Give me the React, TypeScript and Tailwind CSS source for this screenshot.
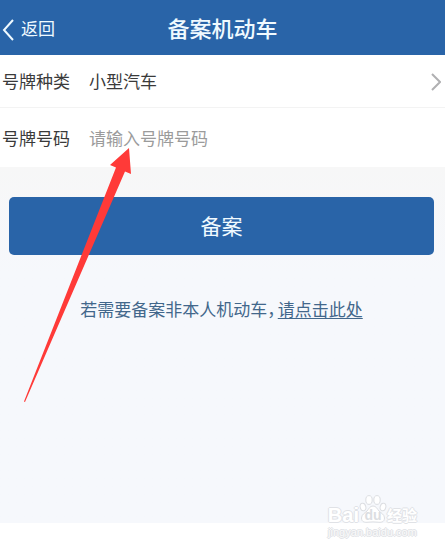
function Watermark() {
  return (
    <div className="absolute right-7 bottom-2 flex flex-col items-center text-white [text-shadow:1px_0_0_#e0e2e6,-1px_0_0_#e0e2e6,0_1px_0_#e0e2e6,0_-1px_0_#e0e2e6]">
      <div className="flex h-7 items-end">
        <span className="text-xl leading-5 font-bold">Bai</span>
        <span className="relative flex h-7 w-7 items-end justify-center">
          <svg viewBox="0 0 28 28" className="absolute inset-x-0 bottom-0.5 h-7 w-7" fill="#fff" stroke="#dcdee2" strokeWidth="1" aria-hidden="true">
            <ellipse cx="4" cy="12" rx="2.8" ry="3.8" transform="rotate(-15 4 12)" />
            <ellipse cx="10" cy="5" rx="3.2" ry="4.4" />
            <ellipse cx="18" cy="5" rx="3.2" ry="4.4" />
            <ellipse cx="24" cy="12" rx="2.8" ry="3.8" transform="rotate(15 24 12)" />
            <path d="M14 11c-3 0-4 2.500-6 5-2 2-5.500 3.500-5.500 7 0 4.500 4 4.500 6.500 4.200 3-.4 7-.4 10 0 2.500.3 6.500.3 6.500-4.200 0-3.500-3.500-5-5.500-7-2-2.500-3-5-6-5z" />
          </svg>
          <span className="relative text-sm leading-5 font-bold text-[#dcdee2] [text-shadow:none]">du</span>
        </span>
        <span className="font-['Noto_Sans_CJK_SC',sans-serif] text-[15px] leading-5 font-bold">经验</span>
      </div>
      <span className="text-[11px] leading-[14px] text-[#fafafa]">jingyan.baidu.com</span>
    </div>
  );
}

function Arrow() {
  return (
    <svg
      viewBox="0 0 108 256"
      className="pointer-events-none absolute top-[147px] left-[23px] h-64 w-[108px]"
      fill="#ff3a38"
      aria-hidden="true"
    >
      <path d="M106 1 L87 18 L93 20.500 L1 254.500 L2 255 L102 24.500 L108 27 Z" />
    </svg>
  );
}

export default function App() {
  return (
    <div className="relative flex min-h-screen flex-col bg-white font-['Liberation_Sans','Noto_Sans_CJK_SC',sans-serif] text-[17px] leading-6">
      <header className="relative flex h-[55px] items-center justify-center bg-[#2964a8] pt-1 text-[#f0faff]">
        <button type="button" className="absolute top-[18px] left-0.5 flex items-center gap-[7px]">
          <svg viewBox="0 0 12 22" className="h-[22px] w-3" fill="none" stroke="currentColor" strokeWidth="2" aria-hidden="true">
            <path d="M11 1 L2 11 L11 21" />
          </svg>
          返回
        </button>
        <h1 className="text-[22px] leading-7 font-medium">备案机动车</h1>
      </header>

      <form className="flex flex-1 flex-col" onSubmit={(e) => e.preventDefault()}>
        <div className="flex h-[53px] items-center border-b border-[#f3f3f3] pt-1 pr-1 pl-0.5 text-[#3a3a3a]">
          <label htmlFor="kind" className="w-[87px] shrink-0">号牌种类</label>
          <select id="kind" className="h-8 min-w-0 flex-1 appearance-none bg-transparent outline-none">
            <option>小型汽车</option>
          </select>
          <svg viewBox="0 0 10 20" className="h-5 w-2.5" fill="none" stroke="#b0b0b2" strokeWidth="2" aria-hidden="true">
            <path d="M1 1 L9 9 L1 17" />
          </svg>
        </div>
        <div className="flex h-[59px] items-center pt-1 pr-1 pl-0.5 text-[#3a3a3a]">
          <label htmlFor="plate" className="w-[87px] shrink-0">号牌号码</label>
          <input
            id="plate"
            type="text"
            placeholder="请输入号牌号码"
            className="h-8 min-w-0 flex-1 bg-transparent outline-none placeholder:text-[#9b9b9b]"
          />
        </div>
        <div className="flex-1 bg-linear-to-b from-[#f7f7f7] via-[#f6f8fc] via-30% to-[#f6f8fc] pt-[30px] pr-[11px] pl-[9px]">
          <button type="submit" className="h-[58px] w-full rounded-[5px] bg-[#2964a8] pt-0.5 text-[21px] leading-7 text-[#f0faff]">
            备案
          </button>
          <p className="mt-11 text-center text-[#42678b]">
            若需要备案非本人机动车<span className="mr-0.5 [font-feature-settings:'halt']">，</span>
            <a href="#other" className="underline underline-offset-2">请点击此处</a>
          </p>
        </div>
      </form>

      <footer className="h-6" />
      <Watermark />
      <Arrow />
    </div>
  );
}
